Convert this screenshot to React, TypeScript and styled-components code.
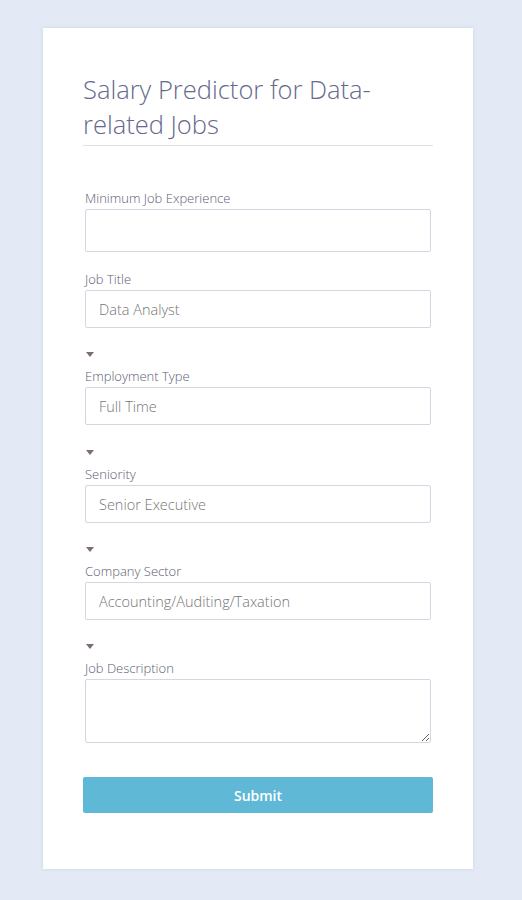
import styled, { createGlobalStyle } from "styled-components";

const GlobalStyle = createGlobalStyle`
  html, body {
    margin: 0;
    padding: 0;
    background: #e3e9f5;
  }
  body {
    font-family: "Open Sans", "Liberation Sans", sans-serif;
  }
`;

const Page = styled.div`
  min-height: 900px;
  padding: 28px 0 32px 43px;
  box-sizing: border-box;
`;

const Card = styled.div`
  width: 430px;
  box-sizing: border-box;
  background: #ffffff;
  padding: 44px 40px 56px;
  box-shadow: 0 0 3px rgba(160, 175, 205, 0.35);
`;

const Title = styled.h1`
  margin: 0;
  padding-bottom: 3px;
  font-family: "Open Sans", sans-serif;
  font-weight: 300;
  font-size: 25.5px;
  line-height: 35px;
  color: #66698c;
  border-bottom: 1px solid #dde2ea;
`;

const Fields = styled.form`
  display: flex;
  flex-direction: column;
  padding: 43px 2px 0;
`;

const Field = styled.div<{ $gap: number }>`
  display: flex;
  flex-direction: column;
  margin-top: ${(p) => p.$gap}px;
`;

const Caret = styled.span`
  display: block;
  width: 0;
  height: 0;
  margin: 1px 0 7px 1px;
  border-left: 4px solid transparent;
  border-right: 4px solid transparent;
  border-top: 5px solid #7f6c6c;
`;

const Label = styled.label<{ $dropdown?: boolean }>`
  font-family: "Open Sans", sans-serif;
  font-weight: 300;
  font-size: 13px;
  line-height: 18px;
  color: #5c5c72;
  margin-top: ${(p) => (p.$dropdown ? 3 : 0)}px;
  margin-bottom: 2px;
`;

const Input = styled.input<{ $h: number }>`
  box-sizing: border-box;
  width: 100%;
  height: ${(p) => p.$h}px;
  border: 1px solid #d5d6e2;
  border-radius: 2px;
  padding: 0 13px;
  font-family: "Open Sans", sans-serif;
  font-weight: 300;
  font-size: 14.5px;
  color: #85859a;
  background: #fff;
  outline: none;
`;

const TextArea = styled.textarea`
  box-sizing: border-box;
  width: 100%;
  height: 64px;
  border: 1px solid #d5d6e2;
  border-radius: 2px;
  padding: 8px 13px;
  font-family: "Open Sans", sans-serif;
  font-size: 14.5px;
  color: #85859a;
  outline: none;
  display: block;
`;

const SubmitButton = styled.button`
  margin: 34px -2px 0;
  height: 36px;
  border: none;
  border-radius: 2px;
  background: #5fb8d6;
  color: #ffffff;
  font-family: "Open Sans", sans-serif;
  font-weight: 600;
  font-size: 14px;
  cursor: pointer;
`;

const dropdowns = [
  { label: "Employment Type", value: "Full Time", gap: 23 },
  { label: "Seniority", value: "Senior Executive", gap: 24 },
  { label: "Company Sector", value: "Accounting/Auditing/Taxation", gap: 23 },
];

const App = () => {
  return (
    <>
      <GlobalStyle />
      <Page>
        <Card>
          <Title>Salary Predictor for Data-related Jobs</Title>
          <Fields onSubmit={(e) => e.preventDefault()}>
            <Field $gap={0}>
              <Label>Minimum Job Experience</Label>
              <Input $h={43} type="text" />
            </Field>
            <Field $gap={18}>
              <Label>Job Title</Label>
              <Input $h={38} type="text" placeholder="Data Analyst" />
            </Field>
            {dropdowns.map((d) => (
              <Field $gap={d.gap} key={d.label}>
                <Caret />
                <Label $dropdown>{d.label}</Label>
                <Input $h={38} type="text" placeholder={d.value} />
              </Field>
            ))}
            <Field $gap={23}>
              <Caret />
              <Label $dropdown>Job Description</Label>
              <TextArea />
            </Field>
            <SubmitButton type="submit">Submit</SubmitButton>
          </Fields>
        </Card>
      </Page>
    </>
  );
};

export default App;
